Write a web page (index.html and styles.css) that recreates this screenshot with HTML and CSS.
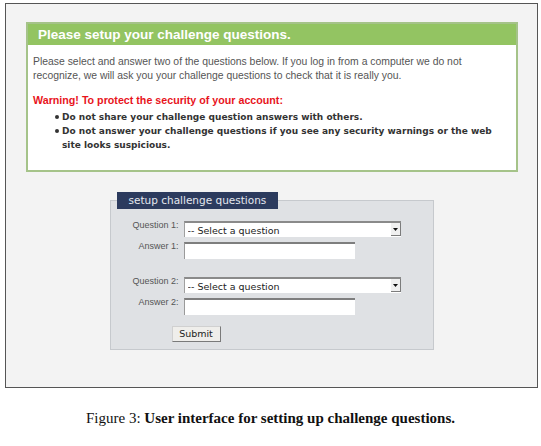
FILE: index.html
```html
<!DOCTYPE html>
<html lang="en">

<head>
    <meta charset="UTF-8">
    <title>Setup challenge questions</title>
    <link rel="stylesheet" href="styles.css">
</head>

<body>

    <div class="frame">

        <!-- Notice Box -->
        <div class="notice">
            <div class="notice-title">Please setup your challenge questions.</div>
            <div class="notice-body">
                <p>Please select and answer two of the questions below. If you log in from a computer we do not
                    recognize, we will ask you your challenge questions to check that it is really you.</p>
                <p class="warning">Warning! To protect the security of your account:</p>
                <ul>
                    <li>Do not share your challenge question answers with others.</li>
                    <li>Do not answer your challenge questions if you see any security warnings or the web site looks suspicious.</li>
                </ul>
            </div>
        </div>

        <!-- Challenge Form -->
        <form class="challenge-form" onsubmit="return false">
            <fieldset>
                <legend>setup challenge questions</legend>

                <div class="row">
                    <label for="q1">Question 1:</label>
                    <div class="select-wrap">
                        <select id="q1">
                            <option>-- Select a question</option>
                        </select>
                        <span class="select-arrow">
                            <svg width="5" height="3" viewBox="0 0 5 3"><path d="M0 0h5L2.5 3z" fill="#111" /></svg>
                        </span>
                    </div>
                </div>
                <div class="row">
                    <label for="a1">Answer 1:</label>
                    <input type="text" id="a1">
                </div>

                <div class="row row-gap">
                    <label for="q2">Question 2:</label>
                    <div class="select-wrap">
                        <select id="q2">
                            <option>-- Select a question</option>
                        </select>
                        <span class="select-arrow">
                            <svg width="5" height="3" viewBox="0 0 5 3"><path d="M0 0h5L2.5 3z" fill="#111" /></svg>
                        </span>
                    </div>
                </div>
                <div class="row">
                    <label for="a2">Answer 2:</label>
                    <input type="text" id="a2">
                </div>

                <div class="submit-row">
                    <button type="submit">Submit</button>
                </div>
            </fieldset>
        </form>

    </div>

    <p class="caption">Figure 3: <strong>User interface for setting up challenge questions.</strong></p>

</body>

</html>
```

FILE: styles.css
```css
/* General Styling */
body {
    margin: 0;
    padding: 0;
    background-color: #ffffff;
    font-family: 'Liberation Sans', Arial, sans-serif;
}

/* Screenshot Frame */
.frame {
    width: 531px;
    height: 383px;
    margin: 3px 0 0 5px;
    border: 1px solid #555555;
    background-color: #f3f3f3;
    overflow: hidden;
}

/* Notice Box */
.notice {
    margin: 18px 19px 0 20px;
    border: 2px solid #a5c389;
    background-color: #ffffff;
}

.notice-title {
    background-color: #93c462;
    color: #ffffff;
    font-weight: bold;
    font-size: 13.5px;
    line-height: 22px;
    height: 21px;
    padding-left: 10px;
}

.notice-body {
    padding: 10px 6px 18px 5px;
}

.notice-body p {
    margin: 0;
    font-size: 10.4px;
    line-height: 14px;
    color: #555555;
}

.notice-body .warning {
    margin-top: 10px;
    font-size: 10.7px;
    font-weight: bold;
    color: #e8141c;
}

.notice-body ul {
    margin: 3px 0 0 0;
    padding-left: 29px;
    list-style: none;
    font-family: 'DejaVu Sans', Verdana, sans-serif;
    font-weight: bold;
    font-size: 9px;
    line-height: 14px;
    color: #333333;
}

.notice-body li {
    position: relative;
}

.notice-body li::before {
    content: "";
    position: absolute;
    left: -7px;
    top: 5px;
    width: 4px;
    height: 4px;
    border-radius: 50%;
    background-color: #333333;
}

/* Challenge Form */
.challenge-form {
    width: 324px;
    margin: 20px auto 0;
}

fieldset {
    margin: 0;
    padding: 12px 6px 7px 6px;
    border: 1px solid #c6c9cd;
    background-color: #dfe1e4;
}

legend {
    padding: 0 12px;
    background-color: #2c3b5e;
    color: #e4e8ef;
    font-family: 'DejaVu Sans', Verdana, sans-serif;
    font-size: 10.5px;
    line-height: 17px;
}

.row {
    display: flex;
    align-items: flex-start;
    gap: 5px;
    margin-bottom: 5px;
}

.row-gap {
    margin-top: 18px;
}

.row label {
    width: 62px;
    text-align: right;
    font-size: 9px;
    line-height: 10px;
    color: #555555;
    margin-top: -1px;
}

.select-wrap {
    position: relative;
    width: 217px;
    height: 16px;
}

select {
    appearance: none;
    -webkit-appearance: none;
    display: block;
    width: 100%;
    height: 16px;
    margin: 0;
    padding: 0 0 0 3px;
    border: none;
    border-top: 2px solid #8a8a8a;
    border-left: 1px solid #a0a0a0;
    border-radius: 0;
    background-color: #ffffff;
    font-family: 'DejaVu Sans', Verdana, sans-serif;
    font-size: 9.5px;
    color: #222222;
}

.select-arrow {
    position: absolute;
    top: 2px;
    right: 0;
    width: 10px;
    height: 13px;
    display: flex;
    align-items: center;
    justify-content: center;
    background-color: #f0f0f0;
    border-right: 1px solid #7c7c7c;
    border-bottom: 1px solid #7c7c7c;
    box-sizing: border-box;
}

input[type="text"] {
    display: block;
    box-sizing: border-box;
    width: 171px;
    height: 17px;
    margin: 0;
    padding: 0 2px;
    border: none;
    border-top: 2px solid #7e7e7e;
    border-left: 1px solid #9a9a9a;
    background-color: #ffffff;
}

.submit-row {
    padding-left: 55px;
    margin-top: 8px;
}

button {
    box-sizing: border-box;
    width: 49px;
    height: 16px;
    padding: 0;
    background-color: #efeeeb;
    border: 1px solid #d0d0d0;
    border-right-color: #7a7a7a;
    border-bottom-color: #7a7a7a;
    font-family: 'DejaVu Sans', Verdana, sans-serif;
    font-size: 9.5px;
    color: #222222;
}

/* Caption */
.caption {
    margin: 22px 0 0 0;
    text-align: center;
    font-family: 'Liberation Serif', 'Times New Roman', serif;
    font-size: 15px;
    line-height: 17px;
    color: #111111;
}
```
